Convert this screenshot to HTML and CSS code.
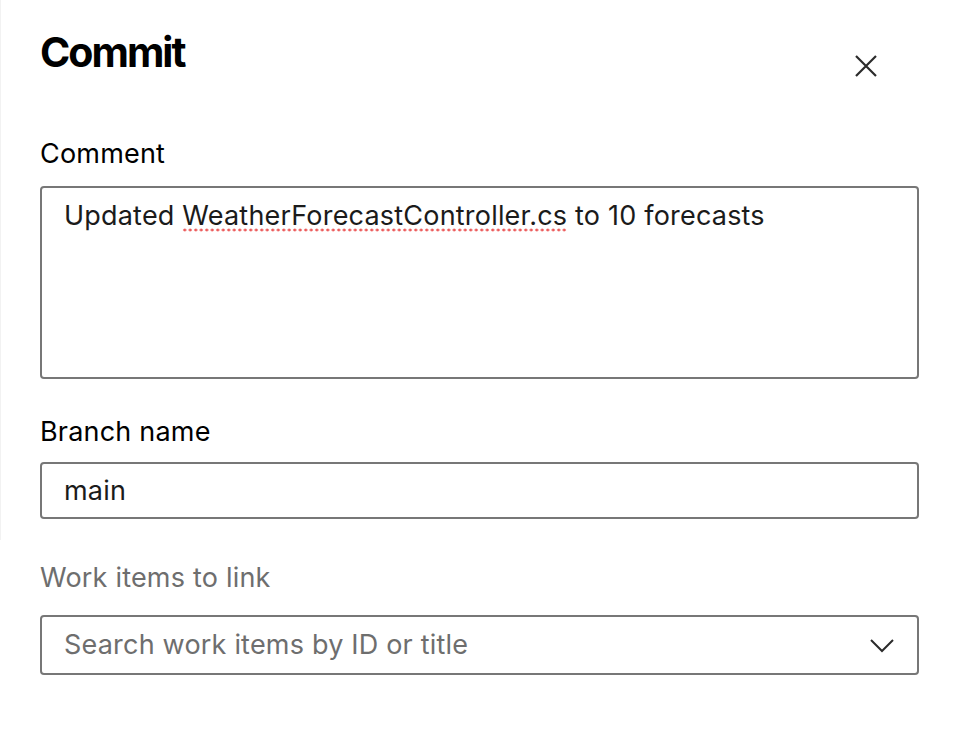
FILE: index.html
```html
<!DOCTYPE html>
<html>
<head>
<meta charset="utf-8">
<link rel="stylesheet" href="styles.css">
</head>
<body>
<div class="panel">
  <div class="header">
    <h1 class="title">Commit</h1>
    <button class="close" aria-label="Close">
      <svg width="22" height="22" viewBox="0 0 22 22"><path d="M1 1 L21 21 M21 1 L1 21" stroke="#2b2b2b" stroke-width="2.2" fill="none"/></svg>
    </button>
  </div>
  <div class="label label-comment">Comment</div>
  <div class="textarea">Updated <span class="misspelled">WeatherForecastController.cs</span> to 10 forecasts</div>
  <div class="label label-branch">Branch name</div>
  <div class="input">main</div>
  <div class="label label-muted">Work items to link</div>
  <div class="dropdown">
    <span class="placeholder">Search work items by ID or title</span>
    <svg class="chevron" width="24" height="14" viewBox="0 0 24 14"><path d="M1 1 L12 12 L23 1" stroke="#2b2b2b" stroke-width="2" fill="none"/></svg>
  </div>
</div>
</body>
</html>
```
FILE: styles.css
```css
html, body {
  margin: 0;
  padding: 0;
}
body {
  background: #ffffff linear-gradient(#f2f2f2, #f2f2f2) no-repeat 0 0 / 1px 540px;
  font-family: Inter, "Liberation Sans", sans-serif;
  color: #1e1e1e;
}
.panel {
  width: 879px;
  padding: 0 37px 0 40px;
}
.header {
  display: flex;
  justify-content: space-between;
  align-items: flex-start;
  padding-top: 28px;
  height: 138px;
  box-sizing: border-box;
}
.title {
  margin: 0;
  font-size: 41px;
  line-height: 48px;
  font-weight: 700;
  letter-spacing: -2px;
  color: #000;
}
.close {
  border: none;
  background: none;
  padding: 0;
  margin: 27px 42px 0 0;
  width: 22px;
  height: 22px;
  display: flex;
}
.label {
  font-size: 27px;
  line-height: 32px;
  letter-spacing: 0.2px;
  color: #000;
}
.textarea {
  margin-top: 16px;
  height: 193px;
  box-sizing: border-box;
  border: 2px solid #777;
  border-radius: 4px;
  padding: 12px 22px;
  font-size: 27px;
  line-height: 32px;
  letter-spacing: 0.2px;
  color: #1b1b1b;
}
.misspelled {
  background-image: radial-gradient(circle, #ec5c5c 1.3px, transparent 1.7px);
  background-size: 5.5px 4px;
  background-repeat: repeat-x;
  background-position: 0 calc(100% - 0.5px);
}
.label-branch {
  margin-top: 36.5px;
}
.input {
  margin-top: 14.5px;
  height: 57px;
  box-sizing: border-box;
  border: 2px solid #777;
  border-radius: 4px;
  padding: 0 22px;
  display: flex;
  align-items: center;
  font-size: 27px;
  line-height: 32px;
  letter-spacing: 0.2px;
  color: #1b1b1b;
}
.label-muted {
  margin-top: 43px;
  color: #6e6e6e;
}
.dropdown {
  margin-top: 21px;
  height: 60px;
  box-sizing: border-box;
  border: 2px solid #777;
  border-radius: 4px;
  padding: 0 23px 0 22px;
  display: flex;
  align-items: center;
  justify-content: space-between;
  font-size: 27px;
  line-height: 32px;
  letter-spacing: 0.2px;
}
.placeholder {
  color: #6e6e6e;
}
.chevron {
  margin-top: 2px;
}
```
